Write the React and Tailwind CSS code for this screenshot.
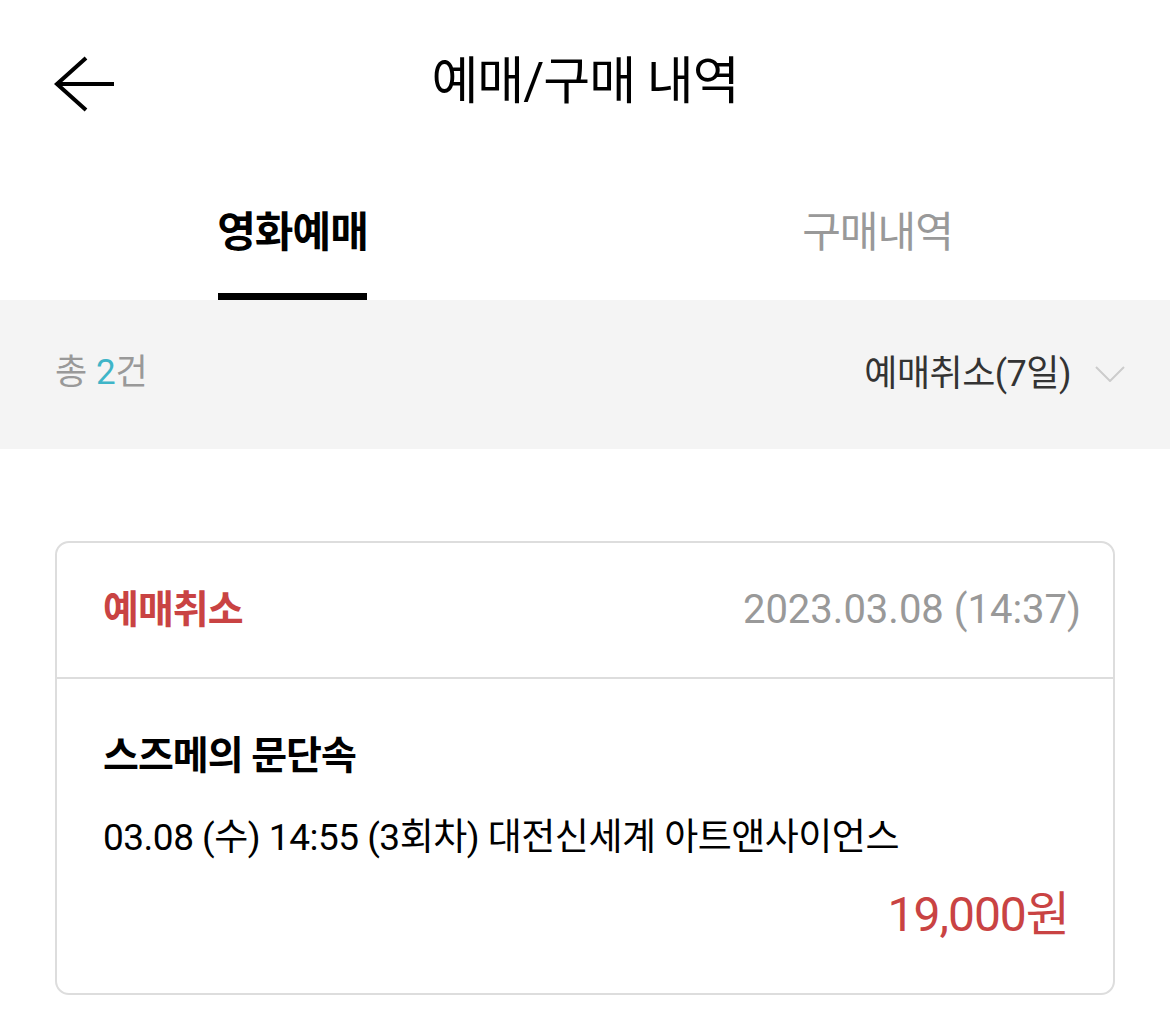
export default function App() {
  const font = { fontFamily: '"Roboto", "Noto Sans CJK KR", sans-serif' };
  return (
    <div className="w-[1170px] h-[1031px] bg-white overflow-hidden text-black" style={font}>
      {/* Header */}
      <div className="relative h-[160px]">
        <svg className="absolute left-[54px] top-[55px]" width="64" height="58" viewBox="0 0 64 58" fill="none">
          <path d="M3 29H60M32 3L3 29L32 55" stroke="#000" strokeWidth="4" strokeLinecap="butt" strokeLinejoin="miter" />
        </svg>
        <div className="absolute left-0 right-0 top-[52px] text-center text-[51px] leading-[60px] tracking-[-1px]">예매/구매 내역</div>
      </div>
      {/* Tabs */}
      <div className="flex h-[140px]">
        <div className="flex-1 flex flex-col items-center justify-end">
          <div className="flex flex-col items-center">
            <div className="text-[42px] leading-[50px] font-bold tracking-[-1px] mb-[35px]">영화예매</div>
            <div className="h-[7px] w-[149px] bg-black" />
          </div>
        </div>
        <div className="flex-1 flex flex-col items-center justify-end">
          <div className="text-[42px] leading-[50px] text-[#999999] tracking-[-1px] mb-[42px]">구매내역</div>
        </div>
      </div>
      {/* Filter band */}
      <div className="h-[149px] bg-[#f4f4f4] flex items-center justify-between pl-[55px] pr-[45px]">
        <div className="text-[35px] text-[#999999] -mt-[2px]">
          총 <span className="text-[#3fb5c8]">2</span>건
        </div>
        <div className="flex items-center gap-[24px] -mt-[2px]">
          <span className="text-[36px] text-[#333333] tracking-[-0.5px]">예매취소(7일)</span>
          <svg width="30" height="16" viewBox="0 0 30 16" fill="none">
            <path d="M1 1L15 15L29 1" stroke="#cccccc" strokeWidth="2" />
          </svg>
        </div>
      </div>
      {/* Card */}
      <div className="pt-[92px] px-[55px]">
        <div className="border-2 border-[#dddddd] rounded-[14px] h-[454px] flex flex-col">
          <div className="h-[134px] flex items-center justify-between pl-[46px] pr-[32px]">
            <span className="text-[39px] font-bold text-[#c94343] tracking-[-1px]">예매취소</span>
            <span className="text-[40px] text-[#999999]">2023.03.08 (14:37)</span>
          </div>
          <div className="h-[2px] bg-[#dddddd]" />
          <div className="flex flex-col pl-[46px] pr-[44px] pt-[52px]">
            <div className="text-[39px] font-bold leading-[50px] tracking-[-1px]">스즈메의 문단속</div>
            <div className="text-[37px] leading-[50px] mt-[32px] tracking-[-0.5px] whitespace-nowrap">03.08 (수) 14:55 (3회차) 대전신세계 아트앤사이언스</div>
            <div className="text-[48px] leading-[56px] mt-[24px] text-right text-[#c94343] tracking-[-1px]">19,000원</div>
          </div>
        </div>
      </div>
    </div>
  );
}
